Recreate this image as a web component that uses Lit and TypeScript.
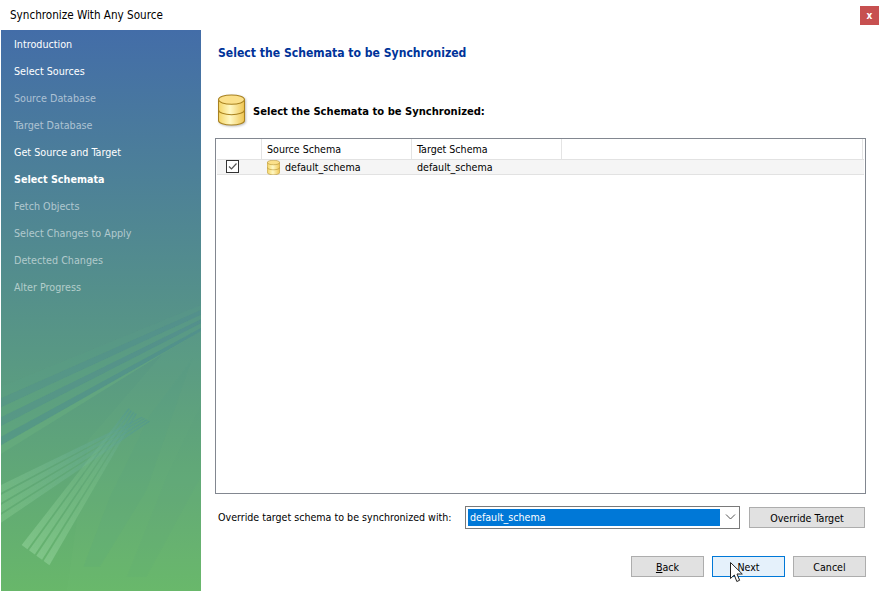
import { LitElement, html, css, svg } from "lit";
import { customElement } from "lit/decorators.js";

const steps = [
  { label: "Introduction", state: "done" },
  { label: "Select Sources", state: "done" },
  { label: "Source Database", state: "off" },
  { label: "Target Database", state: "off" },
  { label: "Get Source and Target", state: "done" },
  { label: "Select Schemata", state: "active" },
  { label: "Fetch Objects", state: "off" },
  { label: "Select Changes to Apply", state: "off" },
  { label: "Detected Changes", state: "off" },
  { label: "Alter Progress", state: "off" },
];

const dbIcon = (id: string, w: number, h: number) => html`
  <svg width=${w} height=${h} viewBox="1 1 26 30">
    <defs>
      <linearGradient id=${id} x1="0" x2="1" y1="0" y2="0">
        <stop offset="0" stop-color="#f5d565" />
        <stop offset="0.45" stop-color="#fff8c4" />
        <stop offset="1" stop-color="#efc552" />
      </linearGradient>
    </defs>
    <path d="M1.500 6v20c0 2.600 5.600 4.500 12.500 4.500s12.500-1.900 12.500-4.500V6z" fill="url(#${id})" stroke="#a98220" />
    <path d="M1.500 16c0 2.600 5.600 4.500 12.500 4.500s12.500-1.900 12.500-4.500" fill="none" stroke="#a98220" />
    <ellipse cx="14" cy="6" rx="12.500" ry="4.500" fill="#fbe08a" stroke="#a98220" />
  </svg>
`;

// one fan of beam strands, wide at the far end and pinched where they cross
const strands = (count: number, from: number[], fromStep: number[], to: number[], toStep: number[], w: number) =>
  Array.from({ length: count }, (_, i) => {
    const ax = from[0] + fromStep[0] * i;
    const ay = from[1] + fromStep[1] * i;
    const bx = to[0] + toStep[0] * i;
    const by = to[1] + toStep[1] * i;
    return `${ax},${ay} ${ax + fromStep[0] * w},${ay + fromStep[1] * w} ${bx + toStep[0] * 0.6},${by + toStep[1] * 0.6} ${bx},${by}`;
  });

@customElement("app-root")
export class AppRoot extends LitElement {
  static styles = css`
    :host {
      display: block;
      width: 881px;
      height: 591px;
      overflow: hidden;
      position: relative;
      background: #fff;
      color: #000;
      font-family: "DejaVu Sans", sans-serif;
      font-size: 10.6px;
      font-stretch: condensed;
    }
    .titlebar {
      height: 30px;
      display: flex;
      align-items: center;
      justify-content: space-between;
      padding: 0 2px 0 10px;
      box-sizing: border-box;
      font-size: 11.6px;
    }
    .close {
      width: 19px;
      height: 19px;
      background: #c75050;
      color: #fff;
      font-weight: bold;
      font-size: 10px;
      display: flex;
      align-items: center;
      justify-content: center;
    }
    .body {
      display: flex;
      height: 561px;
    }
    .sidebar {
      position: relative;
      margin-left: 1px;
      width: 200px;
      flex: none;
      padding-top: 1px;
      box-sizing: border-box;
      background: linear-gradient(#436da8, #68b76a);
      overflow: hidden;
    }
    .beams {
      position: absolute;
      left: 0;
      bottom: 0;
    }
    .step {
      position: relative;
      height: 27px;
      line-height: 27px;
      padding-left: 13px;
      white-space: nowrap;
      font-size: 10.7px;
    }
    .done {
      color: #fff;
    }
    .off {
      color: rgba(255, 255, 255, 0.56);
    }
    .active {
      color: #fff;
      font-weight: bold;
    }
    .main {
      flex: 1;
      min-width: 0;
      padding: 0 15px 0 14px;
      display: flex;
      flex-direction: column;
    }
    .heading {
      margin: 14px 0 0 3px;
      height: 18px;
      line-height: 18px;
      color: #003399;
      font-size: 12.1px;
      font-weight: bold;
    }
    .subhead {
      margin: 32px 0 0 3px;
      height: 32px;
      display: flex;
      align-items: center;
      gap: 8px;
      font-weight: bold;
      font-size: 11.1px;
    }
    .subhead svg {
      flex: none;
      filter: drop-shadow(1px 1px 1px rgba(0, 0, 0, 0.25));
    }
    .subhead span {
      padding-top: 2px;
    }
    .list {
      margin-top: 12px;
      height: 356px;
      box-sizing: border-box;
      border: 1px solid #828790;
    }
    .head {
      display: grid;
      grid-template-columns: 46px 150px 150px 301px;
      height: 20px;
    }
    .head div {
      border-right: 1px solid #e4e4e4;
      padding-left: 5px;
      line-height: 20px;
    }
    .row {
      display: grid;
      grid-template-columns: 45px 150px 1fr;
      height: 16px;
      line-height: 15px;
      margin-left: 1px;
      margin-right: 1px;
      box-sizing: border-box;
      background: #f5f5f5;
      border-top: 1px solid #e2e2e2;
      border-bottom: 1px solid #e2e2e2;
    }
    .row > div {
      padding-left: 5px;
      display: flex;
      align-items: center;
      gap: 5px;
    }
    .row > div:first-child {
      padding-left: 9px;
    }
    .check {
      width: 13px;
      height: 13px;
      box-sizing: border-box;
      border: 1px solid #333;
      background: #fff;
      display: block;
      margin-top: -2px;
    }
    .check svg {
      display: block;
    }
    .override {
      margin: 12px 1px 0 3px;
      height: 22px;
      display: flex;
      align-items: center;
    }
    .override label {
      width: 247px;
      flex: none;
    }
    .combo {
      width: 275px;
      height: 23px;
      flex: none;
      box-sizing: border-box;
      border: 1px solid #7a7a7a;
      padding: 2px;
      display: flex;
      align-items: stretch;
    }
    .combo span {
      width: 252px;
      background: #0078d7;
      color: #fff;
      line-height: 16px;
      padding-left: 2px;
      box-sizing: border-box;
    }
    .combo svg {
      margin: auto 0 auto 5px;
    }
    .btn {
      box-sizing: border-box;
      background: #e1e1e1;
      border: 1px solid #adadad;
      font: inherit;
      font-stretch: condensed;
      color: #000;
      padding: 0;
    }
    .override .btn {
      margin-left: 9px;
      width: 116px;
      height: 21px;
      padding-top: 1px;
    }
    .actions {
      margin-top: 28px;
      display: flex;
      justify-content: flex-end;
      gap: 8px;
    }
    .actions .btn {
      width: 73px;
      height: 21px;
    }
    .btn.focus {
      background: #e5f1fb;
      border-color: #0078d7;
    }
    .cursor {
      position: absolute;
      left: 730px;
      top: 562px;
    }
  `;

  private beams() {
    const crossA = strands(4, [3, 585], [0, 30], [425, 380], [7, 4], 0.78);
    const crossB = strands(4, [65, 765], [22, 16], [385, 355], [7, 5], 0.78);
    return svg`
      <svg class="beams" width="200" height="301" viewBox="3 0 600 903">
        <defs>
          <filter id="soft"><feGaussianBlur stdDeviation="1.800" /></filter>
          <linearGradient id="fade-a" gradientUnits="userSpaceOnUse" x1="3" y1="640" x2="440" y2="385">
            <stop offset="0" stop-color="#8ccf94" stop-opacity="0.38" />
            <stop offset="1" stop-color="#4f9590" stop-opacity="0.55" />
          </linearGradient>
          <linearGradient id="fade-b" gradientUnits="userSpaceOnUse" x1="90" y1="800" x2="395" y2="360">
            <stop offset="0" stop-color="#9ad8a2" stop-opacity="0.5" />
            <stop offset="0.55" stop-color="#84c890" stop-opacity="0.3" />
            <stop offset="1" stop-color="#4f9590" stop-opacity="0.55" />
          </linearGradient>
        </defs>
        <polygon points="603,120 490,190 265,450 200,903 603,903" fill="#8fd08c" opacity="0.06" />
        <polygon points="577,205 450,375 330,620 250,830 300,830 440,600" fill="#4f9590" opacity="0.08" />
        <polygon points="603,345 500,560 380,860 440,860 603,560" fill="#4f9590" opacity="0.06" />
        <g filter="url(#soft)">
          <polygon points="603,45 603,60 3,325 3,290" fill="#5c9f88" opacity="0.15" />
          <polygon points="603,60 603,74 3,352 3,325" fill="#4a8a94" opacity="0.28" />
          <polygon points="603,74 603,88 3,382 3,352" fill="#62a882" opacity="0.2" />
          <polygon points="603,88 603,100 3,408 3,382" fill="#4a8a94" opacity="0.32" />
          <polygon points="603,100 603,114 3,440 3,408" fill="#62a882" opacity="0.24" />
          <polygon points="603,114 603,124 3,466 3,440" fill="#4a8a94" opacity="0.4" />
          <polygon points="603,124 490,190 3,492 3,466" fill="#6cb47e" opacity="0.35" />
          ${crossA.map((p) => svg`<polygon points=${p} fill="url(#fade-a)" />`)}
          ${crossB.map((p) => svg`<polygon points=${p} fill="url(#fade-b)" />`)}
        </g>
      </svg>
    `;
  }

  render() {
    return html`
      <div class="titlebar">
        <span>Synchronize With Any Source</span>
        <div class="close">x</div>
      </div>
      <div class="body">
        <nav class="sidebar">
          ${this.beams()}
          ${steps.map((s) => html`<div class="step ${s.state}">${s.label}</div>`)}
        </nav>
        <section class="main">
          <div class="heading">Select the Schemata to be Synchronized</div>
          <div class="subhead">
            ${dbIcon("db-big", 27, 32)}
            <span>Select the Schemata to be Synchronized:</span>
          </div>
          <div class="list">
            <div class="head">
              <div></div>
              <div>Source Schema</div>
              <div>Target Schema</div>
              <div></div>
            </div>
            <div class="row">
              <div>
                <span class="check">
                  <svg width="11" height="11" viewBox="0 0 11 11">
                    <path d="M2 5.500l2.500 2.500L9.500 2.500" fill="none" stroke="#555" stroke-width="1.200" />
                  </svg>
                </span>
              </div>
              <div>${dbIcon("db-small", 13, 15)}<span>default_schema</span></div>
              <div>default_schema</div>
            </div>
          </div>
          <div class="override">
            <label>Override target schema to be synchronized with:</label>
            <div class="combo">
              <span>default_schema</span>
              <svg width="11" height="6" viewBox="0 0 11 6">
                <path d="M1 0.500l4.500 4.500L10 0.500" fill="none" stroke="#555" />
              </svg>
            </div>
            <button class="btn">Override Target</button>
          </div>
          <div class="actions">
            <button class="btn"><u>B</u>ack</button>
            <button class="btn focus">Next</button>
            <button class="btn">Cancel</button>
          </div>
        </section>
      </div>
      <svg class="cursor" width="14" height="21" viewBox="0 0 14 21">
        <path
          d="M0.500 0.500V16.500L4.300 13L6.800 19.500L9.600 18.300L7 12H12.300z"
          fill="#fff"
          stroke="#222"
        />
      </svg>
    `;
  }
}
